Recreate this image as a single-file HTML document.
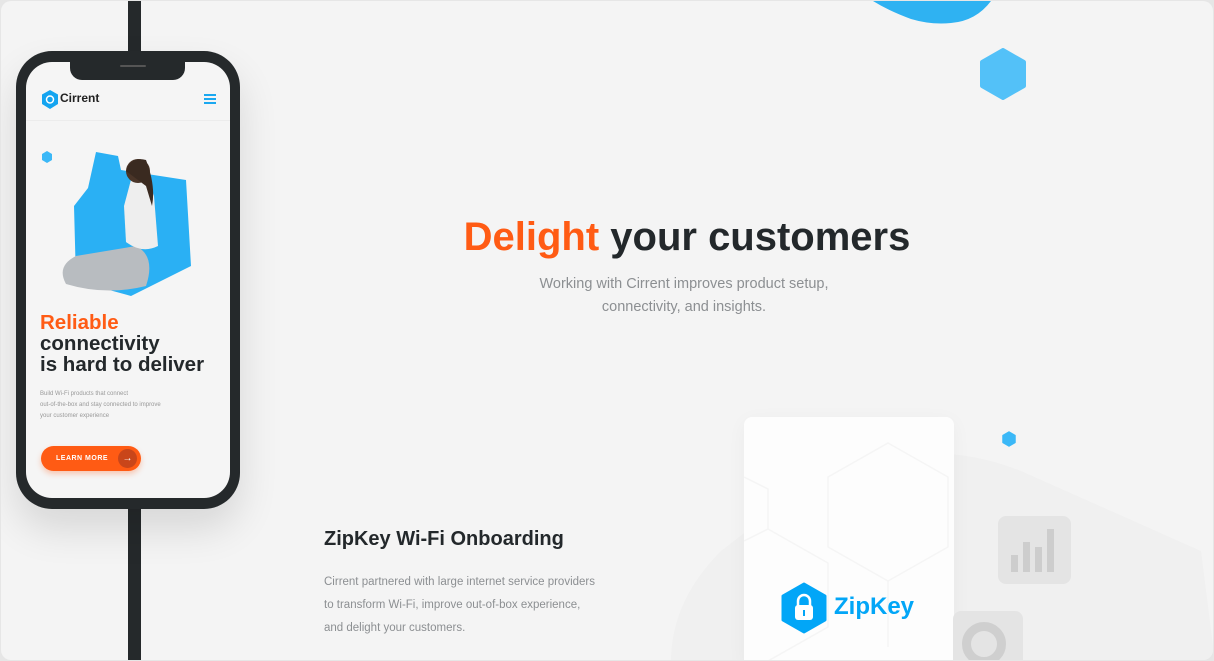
<!DOCTYPE html>
<html><head><meta charset="utf-8"><style>
*{margin:0;padding:0;box-sizing:border-box}
body{width:1214px;height:661px;background:#e6e6e6;font-family:"Liberation Sans",sans-serif;overflow:hidden;position:relative}
.frame{position:absolute;left:1px;top:1px;width:1212px;height:659px;background:#f4f4f4;border-radius:10px;overflow:hidden}
.abs{position:absolute}
</style></head><body>
<div class="frame">
  <svg class="abs" style="left:860px;top:0" width="140" height="30"><path d="M12 0 L130 0 Q115 20 90 22 Q70 24 50 18 Q28 10 12 0Z" fill="#2fb2f2"/></svg>
  <svg class="abs" style="left:978px;top:47px" width="48" height="52"><path d="M24 2 L45 14 L45 38 L24 50 L3 38 L3 14Z" fill="#53c1f8" stroke="#53c1f8" stroke-width="4" stroke-linejoin="round"/></svg>
  <svg class="abs" style="left:1000px;top:430px" width="16" height="16"><path d="M8 1 L14 4.5 L14 11.5 L8 15 L2 11.5 L2 4.5Z" fill="#3bb8f7" stroke="#3bb8f7" stroke-width="1.5" stroke-linejoin="round"/></svg>

  <div class="abs" style="left:286px;width:800px;top:214px;text-align:center;font-size:40px;font-weight:bold;color:#23282b"><span style="color:#ff5b14">Delight</span> your customers</div>
  <div class="abs" style="left:383px;width:600px;top:272px;text-align:center;font-size:14.5px;line-height:23px;color:#8c8f92">Working with Cirrent improves product setup,<br>connectivity, and insights.</div>

  <svg class="abs" style="left:660px;top:440px" width="554" height="221"><path d="M10 221 Q10 160 60 110 L150 40 Q260 -10 360 30 L540 110 L554 221Z" fill="#f0f0f0"/></svg>

  <div class="abs" style="left:743px;top:416px;width:210px;height:250px;background:#fdfdfd;border-radius:8px;box-shadow:0 4px 20px rgba(0,0,0,.04)">
    <svg width="210" height="250" style="position:absolute;left:0;top:0"><g fill="none" stroke="#f5f5f5" stroke-width="1.5"><path d="M0 60 L24 72 L24 112 L0 124"/><path d="M84 60 L144 26 L204 60 L204 130 L144 164 L84 130Z"/><path d="M24 112 L84 146 L84 210 L24 244"/><path d="M144 164 L144 230"/></g></svg>
    <svg class="abs" style="left:36px;top:165px" width="48" height="52"><path d="M24 2 L45 14 L45 38 L24 50 L3 38 L3 14Z" fill="#02a6f7" stroke="#02a6f7" stroke-width="3" stroke-linejoin="round"/><path d="M18 24 V19 a6 6 0 0 1 12 0 V24" fill="none" stroke="#fff" stroke-width="2.5"/><rect x="15" y="23" width="18" height="15" rx="3" fill="#fff"/><path d="M24 28 v6" stroke="#02a6f7" stroke-width="2"/></svg>
    <div class="abs" style="left:90px;top:176px;font-size:24px;font-weight:bold;color:#02a6f7">ZipKey</div>
  </div>
  <div class="abs" style="left:997px;top:515px;width:73px;height:68px;background:#e4e4e4;border-radius:8px">
    <div class="abs" style="left:13px;top:39px;width:7px;height:17px;background:#cdcdcd"></div>
    <div class="abs" style="left:25px;top:26px;width:7px;height:30px;background:#cdcdcd"></div>
    <div class="abs" style="left:37px;top:31px;width:7px;height:25px;background:#cdcdcd"></div>
    <div class="abs" style="left:49px;top:13px;width:7px;height:43px;background:#cdcdcd"></div>
  </div>
  <div class="abs" style="left:952px;top:610px;width:70px;height:60px;background:#e4e4e4;border-radius:8px">
    <div class="abs" style="left:9px;top:11px;width:44px;height:44px;border-radius:50%;border:9px solid #cfcfcf"></div>
  </div>

  <div class="abs" style="left:323px;top:527px;font-size:20px;font-weight:bold;color:#23282b">ZipKey Wi-Fi Onboarding</div>
  <div class="abs" style="left:323px;top:570px;font-size:11.5px;line-height:23px;color:#8c8f92">Cirrent partnered with large internet service providers<br>to transform Wi-Fi, improve out-of-box experience,<br>and delight your customers.</div>

  <div class="abs" style="left:127px;top:0;width:13px;height:661px;background:#25292b"></div>
  <div class="abs" style="left:15px;top:50px;width:224px;height:458px;background:#25292b;border-radius:36px;box-shadow:0 20px 40px rgba(0,0,0,.12)"></div>
  <div class="abs" style="left:25px;top:61px;width:204px;height:436px;background:#f5f5f5;border-radius:26px;overflow:hidden">
    <div class="abs" style="left:44px;top:-2px;width:115px;height:20px;background:#25292b;border-radius:0 0 12px 12px"></div>
    <div class="abs" style="left:94px;top:3px;width:26px;height:2px;background:#555;border-radius:2px"></div>
    <div class="abs" style="left:0;top:58px;width:204px;height:1px;background:#ececec"></div>
    <svg class="abs" style="left:14px;top:27px" width="20" height="21"><path d="M10 1 L18 5.5 L18 15 L10 20 L2 15 L2 5.5Z" fill="#14a4f0"/><circle cx="10" cy="10.5" r="3.5" fill="none" stroke="#fff" stroke-width="1.5"/></svg>
    <div class="abs" style="left:34px;top:29px;font-size:12px;font-weight:bold;color:#222">Cirrent</div>
    <div class="abs" style="left:178px;top:32px;width:12px;height:2px;background:#1ba8f0;box-shadow:0 4px 0 #1ba8f0,0 8px 0 #1ba8f0"></div>
    <svg class="abs" style="left:14px;top:88px" width="14" height="14"><path d="M7 1 L12 4 L12 10 L7 13 L2 10 L2 4Z" fill="#3bb8f7"/></svg>
    <svg class="abs" style="left:20px;top:84px" width="150" height="150"><path d="M50 6 L72 10 L75 24 L140 34 L145 120 L85 150 L30 135 L28 60 L42 42Z" fill="#2ab0f4"/><path d="M30 110 Q10 120 20 138 Q60 150 100 140 Q110 110 90 100 Z" fill="#b8bcc0"/><path d="M86 30 Q100 25 108 50 L112 100 Q96 108 80 96 L78 60Z" fill="#eeeeee"/><circle cx="92" cy="25" r="12" fill="#4a3528"/><path d="M80 25 Q85 10 100 14 Q110 40 106 60 L100 40Z" fill="#3a2a20"/></svg>
    <div class="abs" style="left:14px;top:250px;font-size:20.5px;font-weight:bold;line-height:21px;color:#23282b"><span style="color:#ff5b14">Reliable</span><br>connectivity<br>is hard to deliver</div>
    <div class="abs" style="left:14px;top:327px;font-size:6px;line-height:11px;color:#999">Build Wi-Fi products that connect<br>out-of-the-box and stay connected to improve<br>your customer experience</div>
    <div class="abs" style="left:15px;top:384px;width:100px;height:25px;background:#ff5b14;border-radius:13px;box-shadow:0 3px 6px rgba(255,91,20,.3)">
      <div class="abs" style="left:15px;top:9px;font-size:7px;font-weight:bold;color:#fff;letter-spacing:.5px">LEARN MORE</div>
      <div class="abs" style="left:77px;top:3px;width:19px;height:19px;border-radius:50%;background:#c9461a;color:#fff;font-size:10px;text-align:center;line-height:19px">→</div>
    </div>
  </div>
</div>
</body></html>
